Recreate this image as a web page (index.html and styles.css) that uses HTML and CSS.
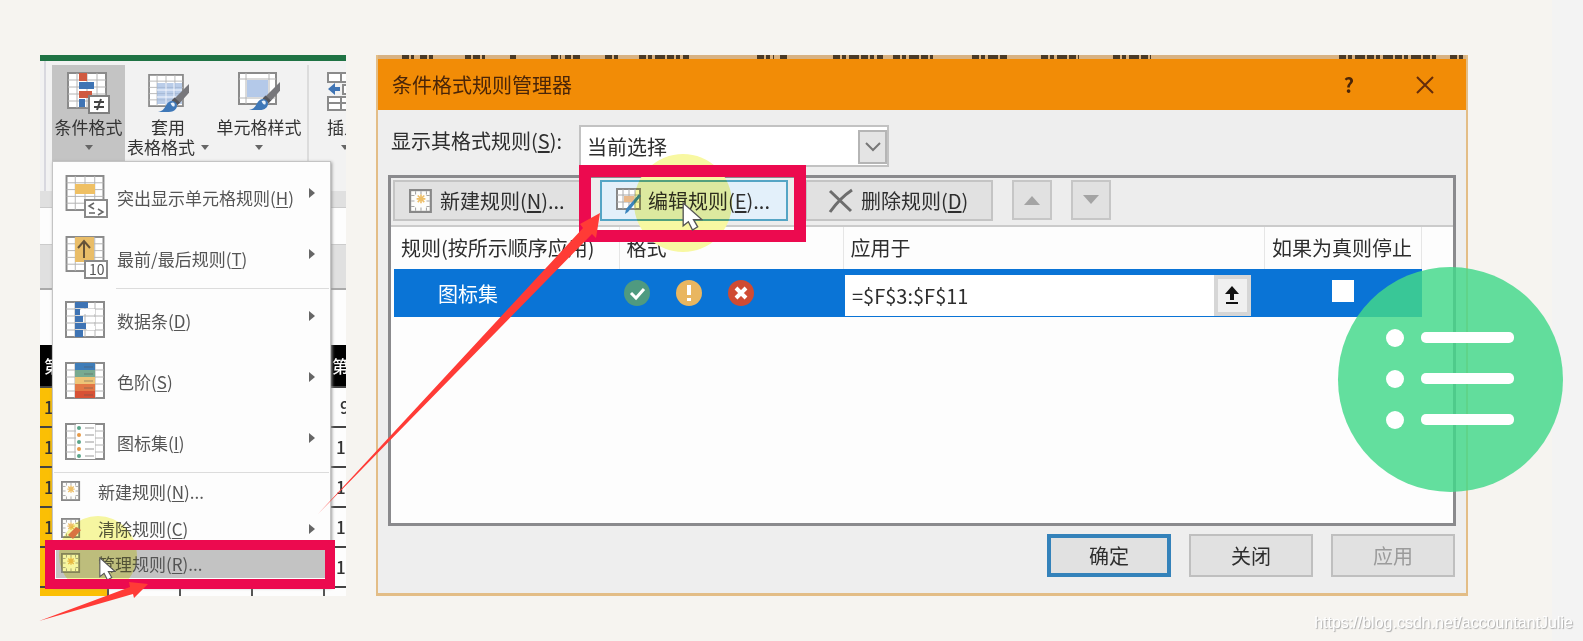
FILE: index.html
```html
<!DOCTYPE html>
<html lang="zh-CN">
<head>
<meta charset="utf-8">
<title>条件格式规则管理器</title>
<link rel="stylesheet" href="styles.css">
</head>
<body>
<svg class="defs" aria-hidden="true">
  <symbol id="grid" viewBox="0 0 40 37">
    <rect x="1" y="1" width="38" height="35" fill="#fff" stroke="#8b8b8b" stroke-width="2"/>
    <path d="M10 1v35M20 1v35M30 1v35M1 8h38M1 15h38M1 22h38M1 29h38" stroke="#b4b4b4" stroke-width="1" fill="none"/>
  </symbol>
  <symbol id="brush" viewBox="0 0 34 32">
    <path d="M33 1v9L24 20l-6-4z" fill="#77777b"/>
    <path d="M18 15l6 5-3 3-6-5z" fill="#55565c"/>
    <path d="M1 30c6-1 7-5 9-8 2-4 7-5 10-1 2 4-1 9-8 9z" fill="#3f78b8"/>
    <path d="M14 21c3-2 5 0 4 3-2 1-3-1-4-3z" fill="#e8f1fa"/>
  </symbol>
  <symbol id="sheet" viewBox="0 0 22 22">
    <rect x="1" y="1" width="19" height="20" fill="#fdfdfb" stroke="#888" stroke-width="2"/>
    <path d="M6 2v3M11 2v3M16 2v3M2 6h3M2 11h3M2 16h3M16 6h3M16 11h3M16 16h3M6 17v3M11 17v3M16 17v3" stroke="#a5a5a5" fill="none"/>
    <path d="M11 5v8M7 9h8M8 6l6 6M14 6l-6 6" stroke="#eebf68" stroke-width="1.5" fill="none"/>
  </symbol>
  <symbol id="cursor" viewBox="0 0 20 28">
    <path d="M1 1v22l5-4 4 8 5-3-4-7h8z" fill="#fff" stroke="#555" stroke-width="1.3"/>
  </symbol>
</svg>

<main class="stage">
  <section class="excel">
    <div class="ribbon">
      <button class="tool active" type="button">
        <svg width="44" height="44" viewBox="0 0 44 44"><use href="#grid" y="1" width="40" height="37"/><path d="M12 2h8v8h-8zM12 20h13v7H12z" fill="#d05a40"/><path d="M12 11h15v7H12zM12 28h6v8h-6z" fill="#3f74b4"/><path d="M22 25h20v17H22z" fill="#fff" stroke="#808080" stroke-width="2"/><path d="M27 31h10M27 36h10M34 28l-4 11" stroke="#444" stroke-width="2"/></svg>
        <span>条件格式</span><i class="down"></i>
      </button>
      <button class="tool" type="button">
        <svg width="44" height="44" viewBox="0 0 44 44"><use href="#grid" x="1" y="3" width="38" height="33"/><path d="M11 12h25v21H11z" fill="#9db8e0" opacity=".7"/><path d="M11 19h25M11 26h25M20 12v21M28 12v21" stroke="#f5f8ff"/><use href="#brush" x="11" y="12" width="33" height="31"/></svg>
        <span>套用</span><span class="line">表格格式<i class="down"></i></span>
      </button>
      <button class="tool wide" type="button">
        <svg width="44" height="44" viewBox="0 0 44 44"><path d="M2 2h37v31H2z" fill="#fff" stroke="#8b8b8b" stroke-width="2"/><path d="M9 2v31M32 2v31M2 8h37M2 27h37" stroke="#b4b4b4" fill="none"/><path d="M10 9h21v17H10z" fill="#b4c9e9"/><use href="#brush" x="11" y="10" width="33" height="31"/></svg>
        <span>单元格样式</span><i class="down"></i>
      </button>
      <button class="tool insert" type="button">
        <svg width="44" height="44" viewBox="0 0 44 44"><path d="M1 2h40v9H1zM1 26h40v13H1zM14 2v9M28 2v9M14 26v13M28 26v13M1 32h40M16 14h26v9H16z" fill="#fff" stroke="#8b8b8b" stroke-width="2"/><path d="M1 18l7-6v4h5v4H8v4z" fill="#3f74b4"/></svg>
        <span>插入</span><i class="down"></i>
      </button>
    </div>
    <div class="strip"></div>
    <div class="formula"></div>
    <div class="heads"></div>
    <table class="cells">
      <colgroup><col class="c1"><col class="c2"><col class="c2"><col class="c2"><col></colgroup>
      <tr class="blank"><td></td><td></td><td></td><td></td><td></td></tr>
      <tr class="black"><th>第</th><th></th><th></th><th></th><th>第</th></tr>
      <tr><td>1</td><td></td><td></td><td></td><td class="far">9</td></tr>
      <tr><td>1</td><td></td><td></td><td></td><td>1</td></tr>
      <tr><td>1</td><td></td><td></td><td></td><td>1</td></tr>
      <tr><td>1</td><td></td><td></td><td></td><td>1</td></tr>
      <tr><td>1</td><td></td><td></td><td></td><td>1</td></tr>
      <tr class="rest"><td></td><td></td><td></td><td></td><td></td></tr>
    </table>

    <div class="menu" role="menu">
      <button class="item" type="button" role="menuitem">
        <svg width="44" height="44" viewBox="0 0 44 44"><use href="#grid" width="40" height="36"/><path d="M10 9h20v10H10z" fill="#efc064"/><path d="M20 25h22v17H20z" fill="#fff" stroke="#8a8a8a" stroke-width="2"/><path d="M29 28l-5 3 5 3M24 38h6M33 34l5 3-5 3" stroke="#666" stroke-width="1.5" fill="none"/></svg>
        <span>突出显示单元格规则(<u>H</u>)</span><i class="more"></i></button>
      <button class="item" type="button" role="menuitem">
        <svg width="44" height="44" viewBox="0 0 44 44"><use href="#grid" width="40" height="36"/><path d="M10 1h19v25H10z" fill="#e9bd68"/><path d="M19 22V6M13 12l6-7 6 7" stroke="#655238" stroke-width="2" fill="none"/><path d="M20 25h22v17H20z" fill="#fff" stroke="#8a8a8a" stroke-width="2"/><text x="24" y="39" class="ten">10</text></svg>
        <span>最前/最后规则(<u>T</u>)</span><i class="more"></i></button>
      <hr class="inset">
      <button class="item" type="button" role="menuitem">
        <svg width="44" height="44" viewBox="0 0 44 44"><use href="#grid" y="3" width="40" height="37"/><path d="M10 4h13v6H10zM10 11h5v6h-5zM10 18h8v6h-8zM10 25h11v6H10zM10 32h8v7h-8z" fill="#3f74b4"/><path d="M16 11h14v5H16zM22 19h8v5h-8zM22 28h8v4h-8z" fill="#fff"/></svg>
        <span>数据条(<u>D</u>)</span><i class="more"></i></button>
      <button class="item" type="button" role="menuitem">
        <svg width="44" height="44" viewBox="0 0 44 44"><use href="#grid" y="3" width="40" height="37"/><path d="M10 4h20v7H10z" fill="#3f7db8"/><path d="M10 11h20v7H10z" fill="#78aa91"/><path d="M10 18h20v7H10z" fill="#edc477"/><path d="M10 25h20v7H10z" fill="#e27846"/><path d="M10 32h20v7H10z" fill="#d75135"/><path d="M19 8h9M19 15h9M19 22h9M19 29h9M19 36h9" stroke="#555" opacity=".5"/></svg>
        <span>色阶(<u>S</u>)</span><i class="more"></i></button>
      <button class="item" type="button" role="menuitem">
        <svg width="44" height="44" viewBox="0 0 44 44"><use href="#grid" y="3" width="40" height="37"/><path d="M11 4h19v35H11z" fill="#fff"/><g fill="#5aa58a"><circle cx="14" cy="8" r="2"/><circle cx="14" cy="22" r="2"/><circle cx="14" cy="36" r="2"/></g><g fill="#e79a48"><circle cx="14" cy="15" r="2"/><circle cx="14" cy="29" r="2"/></g><path d="M20 8h9M20 15h9M20 22h9M20 29h9M20 36h9" stroke="#999"/></svg>
        <span>图标集(<u>I</u>)</span><i class="more"></i></button>
      <hr>
      <button class="item small" type="button" role="menuitem">
        <svg width="22" height="22"><use href="#sheet" width="20" height="20"/></svg>
        <span>新建规则(<u>N</u>)...</span></button>
      <button class="item small" type="button" role="menuitem">
        <svg width="22" height="22"><use href="#sheet" width="20" height="20"/><path d="M7 17l8-8 5 3-8 9z" fill="#e07568"/></svg>
        <span>清除规则(<u>C</u>)</span><i class="more"></i></button>
      <button class="item small chosen" type="button" role="menuitem">
        <svg width="22" height="22"><use href="#sheet" width="20" height="20"/></svg>
        <span>管理规则(<u>R</u>)...</span>
        <b class="glow"></b><svg class="pointer" width="17" height="24"><use href="#cursor"/></svg><b class="frame"></b></button>
    </div>
  </section>

  <section class="dialog">
    <svg class="scraps" height="4" width="100%" aria-hidden="true"><path d="M24 2h12M42 2h14M87 2h6M95 2h12M132 2h6M173 2h10M187 2h6M195 2h8M227 2h14M261 2h50M379 2h17M402 2h8M455 2h50M515 2h40M594 2h36M663 2h38M735 2h38M961 2h100M1072 2h14" stroke="#4b3a26" stroke-width="4" stroke-dasharray="7 2 4 3 10 2"/></svg>
    <header class="title">
      <h1>条件格式规则管理器</h1>
      <button type="button" aria-label="帮助">?</button>
      <button type="button" aria-label="关闭窗口"><svg width="20" height="20" viewBox="0 0 20 20"><path d="M2 2l16 16M18 2L2 18" stroke="#642c0c" stroke-width="2"/></svg></button>
    </header>
    <div class="body">
      <div class="scope">
        <label for="scope">显示其格式规则(<u>S</u>):</label>
        <div class="pick">
          <select id="scope"><option>当前选择</option></select>
          <span class="knob"><svg width="16" height="10" viewBox="0 0 16 10"><path d="M1 1l7 7 7-7" fill="none" stroke="#777" stroke-width="2"/></svg></span>
        </div>
      </div>
      <div class="group">
        <div class="bar">
          <button class="cmd" type="button"><svg width="24" height="24"><use href="#sheet" width="24" height="24"/></svg>新建规则(<u>N</u>)...</button>
          <div class="marked">
            <button class="cmd edit" type="button"><svg width="28" height="28" viewBox="0 0 28 28"><path d="M2 2h23v20H2z" fill="#fff" stroke="#888" stroke-width="2"/><path d="M8 2v20M14 2v20M20 2v20M2 8h23M2 15h23" stroke="#aaa"/><path d="M9 9h10v6H9z" fill="#e9b98a"/><path d="M26 9L13 25l-3 2 1-5L24 7z" fill="#3b84bd"/></svg>编辑规则(<u>E</u>)...</button>
            <b class="glow"></b><b class="frame"></b><svg class="pointer" width="21" height="29"><use href="#cursor"/></svg>
          </div>
          <button class="cmd delete" type="button"><svg width="26" height="26" viewBox="0 0 26 26"><path d="M2 3l21 20M24 2Q12 10 2 24" fill="none" stroke="#6d6d6d" stroke-width="3"/></svg>删除规则(<u>D</u>)</button>
          <button class="move" type="button" aria-label="上移" disabled><svg width="16" height="10"><path d="M0 10l8-9 8 9z" fill="#a4a4a4"/></svg></button>
          <button class="move" type="button" aria-label="下移" disabled><svg width="16" height="10"><path d="M0 0l8 9 8-9z" fill="#a4a4a4"/></svg></button>
        </div>
        <table class="rules">
          <colgroup><col class="name"><col class="fmt"><col><col class="stop"></colgroup>
          <thead><tr><th>规则(按所示顺序应用)</th><th>格式</th><th>应用于</th><th>如果为真则停止</th></tr></thead>
          <tbody><tr>
            <td class="set">图标集</td>
            <td><div class="signs">
              <svg width="26" height="26" viewBox="0 0 26 26"><circle cx="13" cy="13" r="13" fill="#4f9a80"/><path d="M7 13l5 5 8-9" fill="none" stroke="#fff" stroke-width="3"/></svg>
              <svg width="26" height="26" viewBox="0 0 26 26"><circle cx="13" cy="13" r="13" fill="#e9b660"/><path d="M13 5v10M13 18v3" stroke="#fff" stroke-width="4"/></svg>
              <svg width="26" height="26" viewBox="0 0 26 26"><circle cx="13" cy="13" r="13" fill="#cf4b33"/><path d="M8 8l10 10M18 8L8 18" stroke="#fff" stroke-width="4"/></svg>
            </div></td>
            <td><div class="ref"><input type="text" aria-label="应用于" value="=$F$3:$F$11"><button type="button" aria-label="选择区域"><svg width="16" height="20" viewBox="0 0 16 20"><path d="M8 1l7 8H10v6H6V9H1zM2 17h12v2H2z" fill="#111"/></svg></button></div></td>
            <td class="tick"><input type="checkbox" aria-label="如果为真则停止"></td>
          </tr></tbody>
        </table>
      </div>
      <footer class="actions">
        <button class="ok" type="button">确定</button>
        <button type="button">关闭</button>
        <button type="button" disabled>应用</button>
      </footer>
    </div>
  </section>

  <svg class="arrows" width="620" height="641" viewBox="0 0 620 641" aria-hidden="true">
    <path d="M318 514L583 228l-3-4 20-11-4 25-4-4zM39 621l91-34-1-5 19 2-14 14-1-4z" fill="#ff3b36"/>
  </svg>
  <button class="list" type="button" aria-label="目录">
    <svg viewBox="0 0 225 225"><g fill="#fff"><circle cx="57" cy="71" r="9"/><circle cx="57" cy="112" r="9"/><circle cx="57" cy="153" r="9"/><rect x="83" y="65" width="93" height="11" rx="5"/><rect x="83" y="106" width="93" height="11" rx="5"/><rect x="83" y="147" width="93" height="11" rx="5"/></g></svg>
  </button>
  <p class="mark">https://blog.csdn.net/accountantJulie</p>
</main>
</body>
</html>
```
FILE: styles.css
```css
* { box-sizing: border-box; }
body {
  margin: 0;
  background: linear-gradient(to left, #f3f3f3 31px, #f6f4f0 31px);
  color: #333;
  font-family: "Noto Sans CJK SC", "Noto Sans", sans-serif;
}
button, select, input { margin: 0; padding: 0; font: inherit; color: inherit; border: 0; border-radius: 0; background: none; }
svg { flex: none; }
u { text-underline-offset: 2px; }
.defs { display: none; }
.stage {
  position: relative;
  display: flex;
  align-items: flex-start;
  gap: 30px;
  min-height: 100vh;
  padding: 55px 115px 44px 40px;
}

/* Spreadsheet panel */
.excel {
  position: relative;
  flex: 0 0 306px;
  min-width: 0;
  border-top: 6px solid #1f7344;
  background: #fdfdfd;
  font-size: 17px;
}
.ribbon {
  display: flex;
  height: 130px;
  padding: 4px 0 0 12px;
  background: linear-gradient(90deg, #f2f2f2 4px, #d8d8df 4px, #d8d8df 6px, #f2f2f2 6px);
  overflow: hidden;
}
.tool {
  flex: 0 0 73px;
  display: flex;
  flex-direction: column;
  align-items: center;
  height: 96px;
  padding-top: 6px;
  line-height: 20px;
  white-space: nowrap;
}
.tool > svg { margin-bottom: 2px; }
.tool.active { background: #c4c4c4; }
.tool:nth-child(2) { flex-basis: 86px; }
.tool.wide { flex-basis: 98px; border-right: 2px solid #dcdcdc; }
.tool.insert { flex-basis: 60px; align-items: flex-start; padding-left: 18px; }
.line { display: flex; align-items: center; gap: 6px; }
.down { border: 4px solid transparent; border-top: 5px solid #666; border-bottom: 0; }
.tool > .down { margin-top: 8px; }
.insert > .down { margin-left: 14px; }
.strip { height: 17px; background: #e0e0e0; border-bottom: 1px solid #ccc; }
.formula { height: 36px; }
.heads { height: 46px; background: #e0e0e0; border-top: 1px solid #ccc; border-bottom: 2px solid #aaa; }
.cells { width: 100%; table-layout: fixed; border-collapse: collapse; }
.c1 { width: 68px; }
.c2 { width: 72px; }
.cells td, .cells th {
  height: 40px;
  padding: 0 0 0 4px;
  border-bottom: 2px solid #444;
  line-height: 20px;
  font-weight: 500;
  text-align: left;
  white-space: nowrap;
  overflow: hidden;
}
.cells td:first-child { background: #fbbf05; }
.cells td:last-child { padding-left: 12px; }
.cells td.far { padding-left: 16px; }
.cells th:last-child { padding-left: 8px; }
.cells .blank td { height: 55px; background: none; border: 0; }
.cells .black th { height: 42px; background: #000; color: #fff; }
.cells .rest td { height: 9px; border: 0; border-right: 2px solid #555; }
.cells .rest td:last-child { border-right: 0; }

.menu {
  position: absolute;
  top: 100px;
  left: 12px;
  width: 279px;
  padding: 4px 1px 6px;
  border: 1px solid #c4c4c4;
  background: #fdfdfd;
  box-shadow: 1px 1px 3px #999;
}
.menu hr { height: 1px; margin: 0; border: 0; background: #dcdcdc; }
.menu .inset { margin-left: 62px; }
.item {
  display: flex;
  align-items: center;
  gap: 8px;
  width: 100%;
  height: 61px;
  padding: 0 14px 0 11px;
  color: #555;
  text-align: left;
  line-height: 20px;
}
.item > span { flex: 1; padding-top: 2px; }
.more { border: 5px solid transparent; border-left: 6px solid #666; border-right: 0; margin-top: -8px; }
.item.small { position: relative; height: 37px; gap: 15px; padding-left: 7px; }
.small > span { padding-top: 0; }
.small .more { margin-top: 0; }
.item.chosen { height: 33px; padding-left: 5px; border: 2px solid #fdfdfd; background: #c3c3c3; }
.ten { font-size: 14px; fill: #555; }
.glow { position: absolute; border-radius: 50%; background: #f8f8a2; mix-blend-mode: multiply; }
.frame { position: absolute; border: 10px solid #ec0a4f; }
.pointer { position: absolute; }
.chosen .glow { width: 78px; height: 78px; left: 3px; top: -33px; clip-path: inset(0 0 14px); }
.chosen .frame { inset: -9px -8px -11px -11px; }
.chosen .pointer { left: 43px; top: 8px; }

/* Rules manager */
.dialog {
  flex: 1;
  min-width: 0;
  border: solid #e3bd86;
  border-width: 0 2px 3px;
  background: #eeeeee;
  color: #2e2e2e;
  font-size: 20px;
}
.scraps { display: block; background: #d8b283; }
.title {
  display: flex;
  align-items: center;
  gap: 54px;
  height: 51px;
  padding: 0 30px 0 14px;
  background: #f28c06;
  color: #4a2508;
}
.title h1 { flex: 1; margin: 0; font-size: 20px; font-weight: 400; line-height: 28px; }
.title button { display: grid; place-items: center; width: 22px; height: 28px; font-weight: 700; line-height: 28px; }
.body { padding: 15px 10px 16px; }
.scope { display: flex; gap: 17px; padding-left: 3px; }
.scope label { line-height: 32px; }
.pick { position: relative; flex: 0 1 310px; }
.pick select {
  display: block;
  appearance: none;
  width: 100%;
  height: 42px;
  padding: 0 40px 0 6px;
  border: 2px solid #c2c2c2;
  background: #fff;
}
.knob {
  position: absolute;
  top: 5px;
  right: 2px;
  display: grid;
  place-items: center;
  width: 29px;
  height: 34px;
  border: 2px solid #b5b5b5;
  background: #e4e4e4;
  pointer-events: none;
}
.group { min-height: 351px; margin-top: 8px; border: 3px solid #8a8a8d; background: #fdfdfd; }
.bar {
  display: flex;
  align-items: flex-start;
  gap: 17px;
  height: 49px;
  padding: 2px;
  border-bottom: 2px solid #cbcbcb;
  background: #ededed;
}
.cmd {
  display: flex;
  align-items: center;
  width: 190px;
  height: 41px;
  padding-left: 14px;
  border: 2px solid #c4c4c4;
  background: #e1e1e1;
  line-height: 28px;
  white-space: nowrap;
}
.cmd svg { margin-right: 7px; }
.cmd.edit { width: 188px; padding-left: 13px; border-color: #55a5c5; background: #e3f0fa; }
.cmd.edit svg { margin-right: 5px; }
.cmd.delete { width: 188px; padding-left: 21px; }
.marked { position: relative; z-index: 1; }
.marked .frame { inset: -15px -18px -21px -21px; border-width: 12px; }
.marked .glow { width: 98px; height: 98px; left: 34px; top: -26px; }
.marked .pointer { left: 82px; top: 22px; }
.move { display: grid; place-items: center; width: 40px; height: 40px; margin-left: 2px; border: 2px solid #c6c6c6; background: #e1e1e1; }
.rules { width: calc(100% - 34px); margin-left: 3px; table-layout: fixed; border-collapse: collapse; }
.name { width: 225px; }
.fmt { width: 224px; }
.stop { width: 157px; }
.rules th, .rules td { padding: 0; font-weight: 400; text-align: left; white-space: nowrap; }
.rules th { height: 42px; padding-left: 7px; border-right: 1px solid #e6e6e6; line-height: 28px; }
.rules td { height: 48px; background: #0a74d6; }
.rules .set { padding-left: 44px; color: #fff; }
.signs { display: flex; gap: 26px; padding-left: 5px; }
.ref { display: flex; height: 41px; margin: 4px 14px 0 2px; background: #fff; }
.ref input { flex: 1; min-width: 0; padding-left: 7px; }
.ref button { display: grid; place-items: center; width: 37px; border: 4px solid #d6d6d6; background: #f0f0f0; }
.rules .tick { text-align: center; }
.tick input { display: inline-block; appearance: none; width: 22px; height: 22px; background: #fff; }
.actions { display: flex; justify-content: flex-end; gap: 18px; padding: 8px 1px 0 0; }
.actions button { width: 124px; height: 43px; border: 2px solid #bfbfbf; background: #e1e1e1; line-height: 28px; }
.actions .ok { border: 4px solid #3482ba; }
.actions button:disabled { color: #9b9b9b; }

/* Annotations above both panels */
.arrows { position: absolute; top: 0; left: 0; z-index: 3; pointer-events: none; }
.list {
  position: absolute;
  top: 267px;
  right: 20px;
  z-index: 3;
  width: 225px;
  height: 225px;
  border-radius: 50%;
  background: rgba(67, 217, 138, .83);
}
.list svg { display: block; }
.mark {
  position: absolute;
  right: 10px;
  bottom: 8px;
  margin: 0;
  color: #fff;
  font: 16px/20px "Liberation Sans", sans-serif;
  text-shadow: 1px 1px 1px #aaa;
}
```
